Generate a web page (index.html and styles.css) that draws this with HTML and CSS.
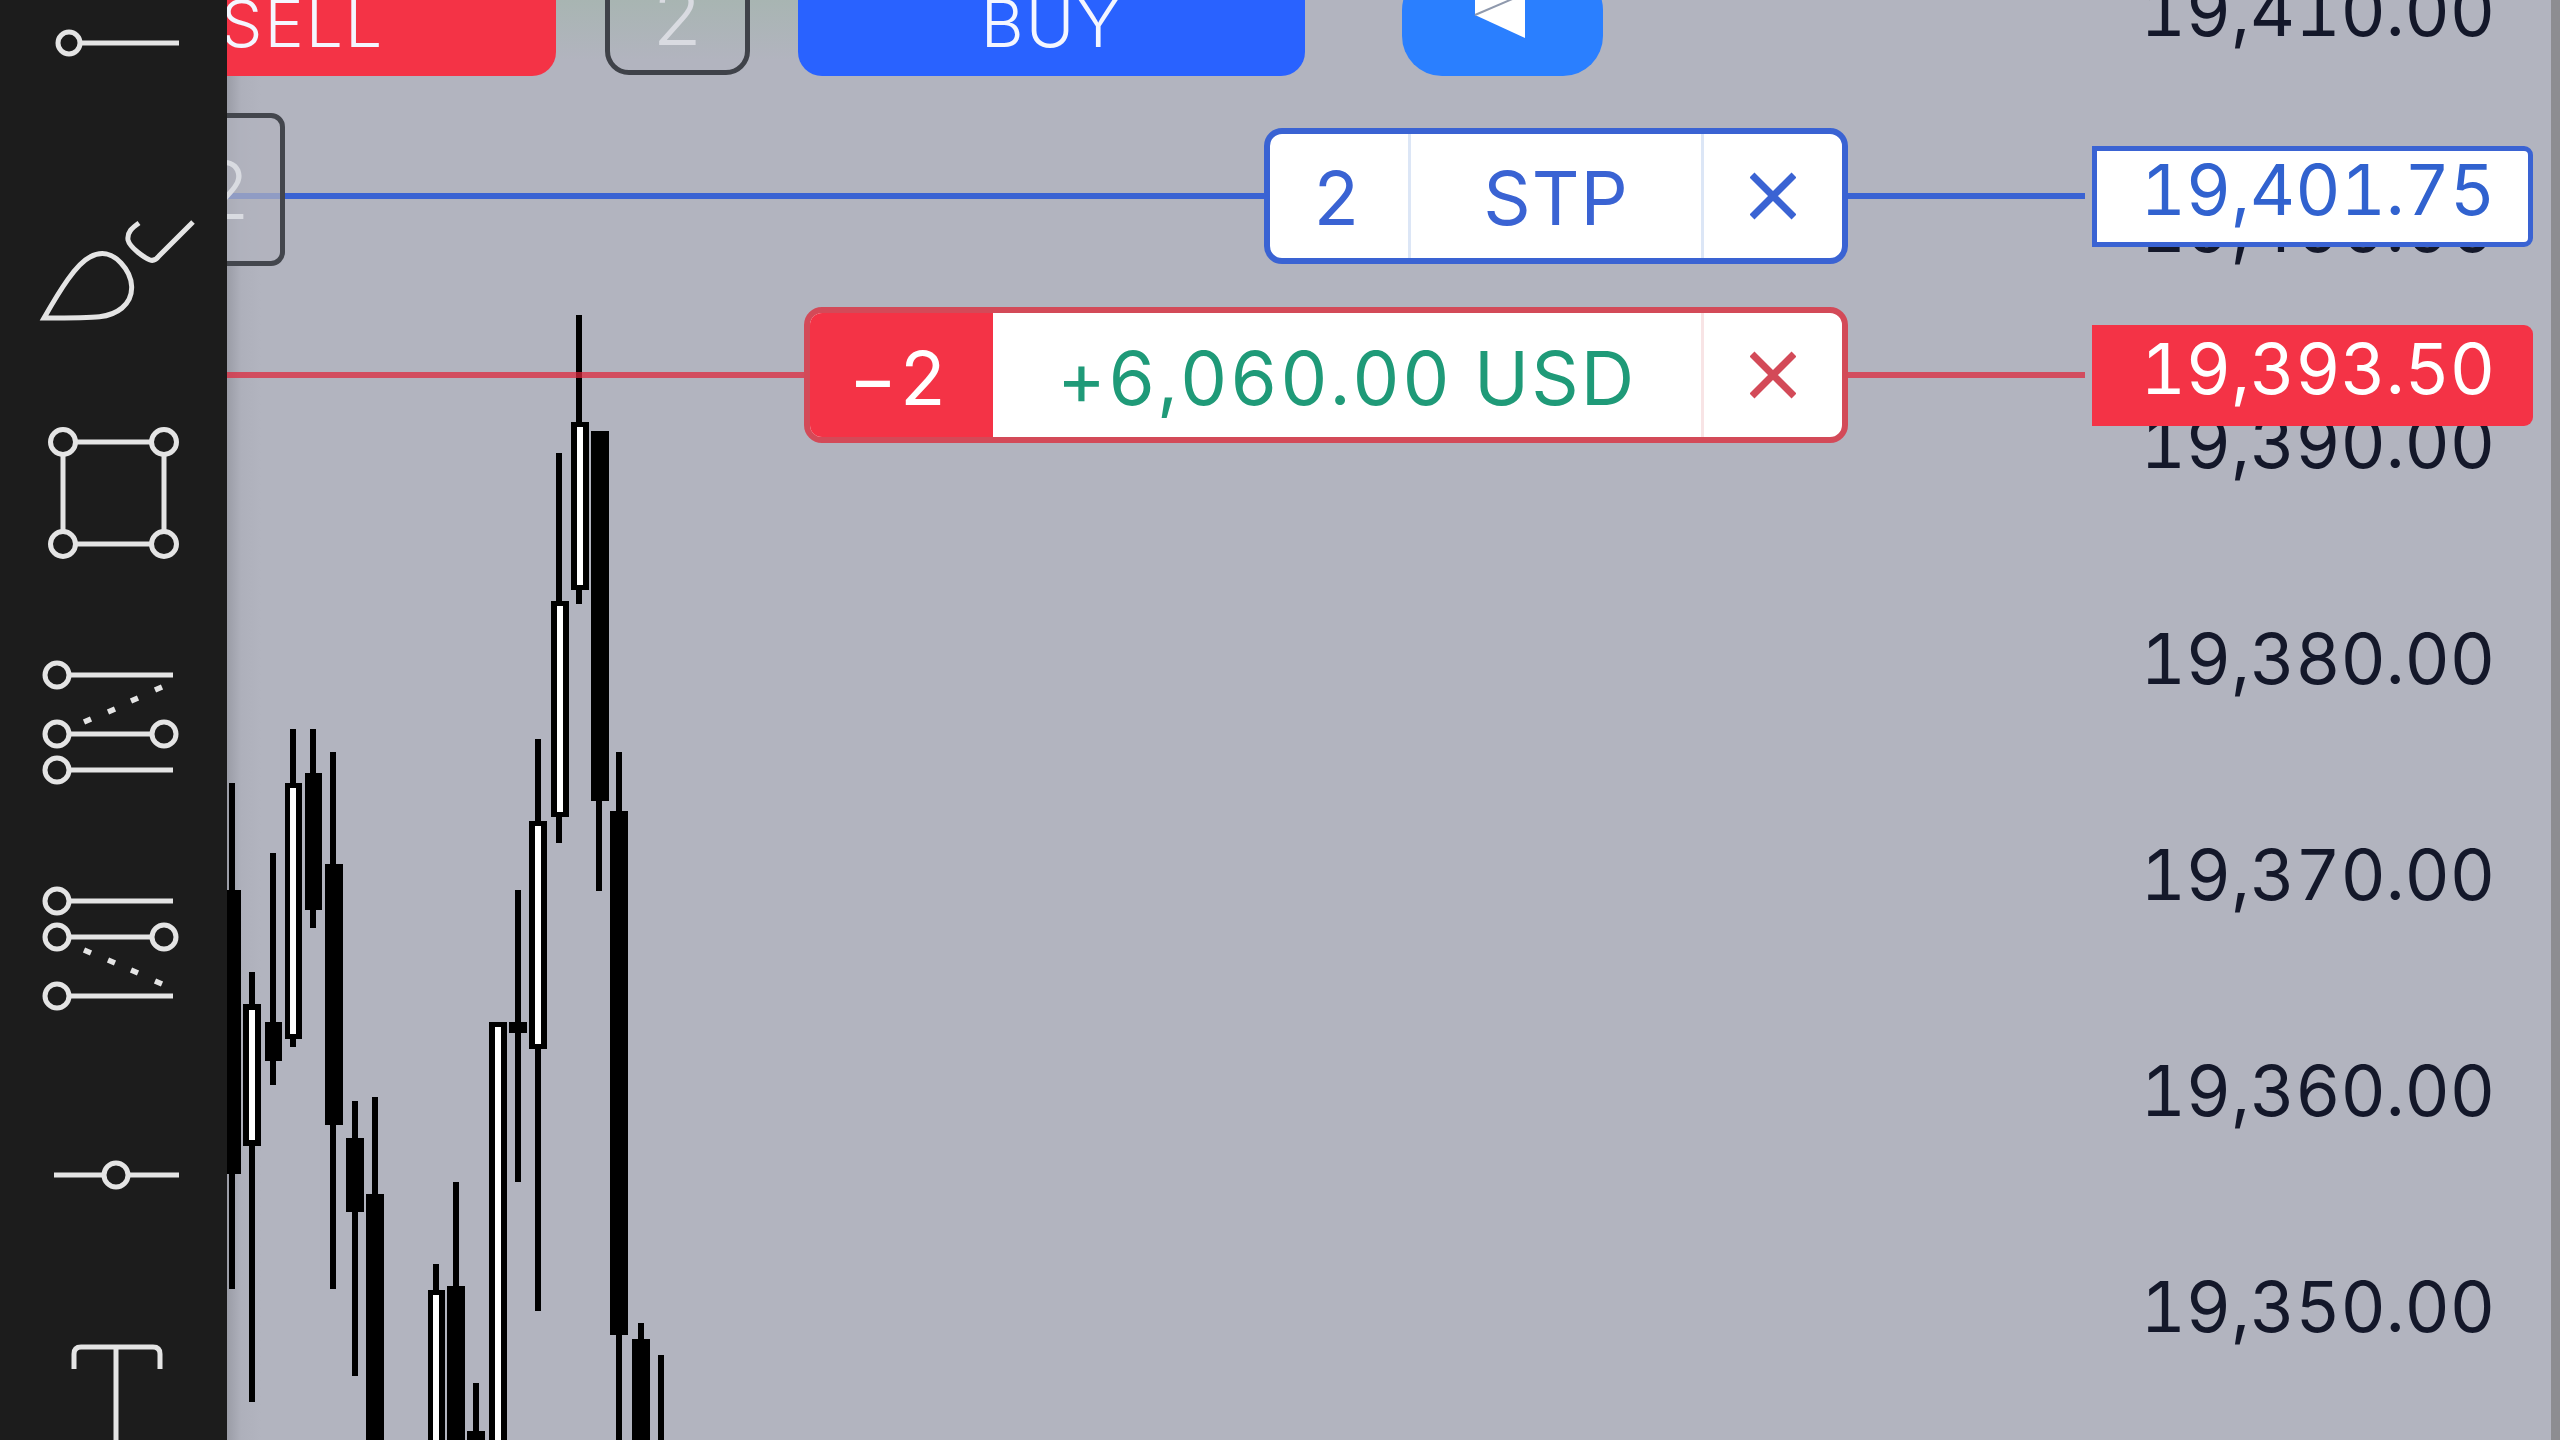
FILE: index.html
```html
<!DOCTYPE html>
<html lang="en">
<head>
<meta charset="utf-8">
<title>Chart</title>
<link rel="stylesheet" href="styles.css">
</head>
<body>
<div class="screen">
  <aside class="toolbar">
    <svg class="tool tool-a" viewBox="0 0 227 120"><circle cx="69" cy="43" r="11"/><path d="M80 43H179"/></svg>
    <svg class="tool tool-b" viewBox="0 120 227 240"><path d="M44 318C60 290 76 264 90 257C101 251 112 253 121 263C134 277 136 296 122 308C110 318 100 318 44 318Z"/><path d="M139 223C132 228 127 232 128 240C130 248 145 258 150 260C153 261 156 260 159 256L193 222"/></svg>
    <svg class="tool tool-c" viewBox="0 360 227 260"><circle cx="63" cy="442" r="12.5"/><circle cx="164" cy="442" r="12.5"/><circle cx="63" cy="544" r="12.5"/><circle cx="164" cy="544" r="12.5"/><path d="M75.500 442H151.500M63 454.500V531.500M164 454.500V531.500M75.500 544H151.500"/></svg>
    <svg class="tool tool-d" viewBox="0 620 227 230"><circle cx="57" cy="675" r="12"/><circle cx="57" cy="734" r="12"/><circle cx="57" cy="770" r="12"/><circle cx="164" cy="734" r="12"/><path d="M69 675H173M69 734H152M69 770H173"/><path class="dash" d="M84 722L91 719M108 712L115 709M131 701L138 698M155 690L162 687"/></svg>
    <svg class="tool tool-e" viewBox="0 850 227 230"><circle cx="57" cy="901" r="12"/><circle cx="57" cy="937" r="12"/><circle cx="57" cy="996" r="12"/><circle cx="164" cy="937" r="12"/><path d="M69 901H173M69 937H152M69 996H173"/><path class="dash" d="M84 950L91 953M108 960L115 963M131 970L138 973M155 981L162 984"/></svg>
    <svg class="tool tool-f" viewBox="0 1080 227 190"><circle cx="116" cy="1175" r="12"/><path d="M54 1175H104M128 1175H179"/></svg>
    <svg class="tool tool-g" viewBox="0 1270 227 170"><path d="M74 1369V1354Q74 1347 81 1347H153Q160 1347 160 1354V1369M116 1347V1440"/></svg>
  </aside>

  <main class="chart">
    <svg class="candles" viewBox="227 0 2333 1440">
      <g class="ink">
        <rect x="229" y="783" width="6" height="506"/><rect x="223" y="890" width="18" height="284"/>
        <rect x="249" y="972" width="6" height="430"/><rect x="243" y="1004" width="18" height="142"/>
        <rect x="270" y="853" width="6" height="232"/><rect x="265" y="1022" width="17" height="39"/>
        <rect x="290" y="729" width="6" height="318"/><rect x="285" y="783" width="17" height="256"/>
        <rect x="310" y="729" width="6" height="199"/><rect x="305" y="773" width="17" height="137"/>
        <rect x="330" y="752" width="6" height="537"/><rect x="325" y="864" width="18" height="261"/>
        <rect x="352" y="1101" width="6" height="275"/><rect x="346" y="1138" width="18" height="74"/>
        <rect x="372" y="1097" width="6" height="343"/><rect x="366" y="1194" width="18" height="246"/>
        <rect x="433" y="1264" width="6" height="176"/><rect x="428" y="1290" width="17" height="150"/>
        <rect x="453" y="1182" width="6" height="258"/><rect x="447" y="1286" width="18" height="154"/>
        <rect x="473" y="1383" width="6" height="57"/><rect x="467" y="1431" width="18" height="9"/>
        <rect x="489" y="1022" width="18" height="418"/>
        <rect x="515" y="890" width="6" height="292"/><rect x="509" y="1022" width="18" height="11"/>
        <rect x="535" y="739" width="6" height="572"/><rect x="529" y="821" width="18" height="228"/>
        <rect x="556" y="453" width="6" height="390"/><rect x="551" y="601" width="18" height="216"/>
        <rect x="576" y="315" width="6" height="289"/><rect x="571" y="422" width="18" height="168"/>
        <rect x="596" y="431" width="6" height="460"/><rect x="591" y="431" width="18" height="370"/>
        <rect x="616" y="752" width="6" height="688"/><rect x="610" y="811" width="18" height="524"/>
        <rect x="638" y="1323" width="6" height="117"/><rect x="632" y="1339" width="18" height="101"/>
        <rect x="658" y="1355" width="6" height="85"/>
      </g>
      <g class="hollow">
        <rect x="249" y="1010" width="6" height="130"/>
        <rect x="290" y="788" width="6" height="246"/>
        <rect x="433" y="1295" width="6" height="145"/>
        <rect x="495" y="1027" width="6" height="413"/>
        <rect x="535" y="826" width="6" height="218"/>
        <rect x="557" y="606" width="6" height="206"/>
        <rect x="577" y="427" width="6" height="158"/>
      </g>
    </svg>

    <div class="axis">
      <span class="tick">19,410.00</span>
      <span class="tick">19,400.00</span>
      <span class="tick">19,390.00</span>
      <span class="tick">19,380.00</span>
      <span class="tick">19,370.00</span>
      <span class="tick">19,360.00</span>
      <span class="tick">19,350.00</span>
    </div>

    <div class="order order-stop">
      <span class="line"></span>
      <div class="ticket">
        <span class="cell cell-qty">2</span>
        <span class="cell cell-text">STP</span>
        <span class="cell cell-close"><svg class="x" viewBox="0 0 46 46"><path d="M2 2L44 44M44 2L2 44"/></svg></span>
      </div>
      <span class="line line-end"></span>
      <span class="price">19,401.75</span>
    </div>

    <div class="order order-pos">
      <span class="line"></span>
      <div class="ticket">
        <span class="cell cell-qty">−2</span>
        <span class="cell cell-text">+6,060.00 USD</span>
        <span class="cell cell-close"><svg class="x" viewBox="0 0 46 46"><path d="M2 2L44 44M44 2L2 44"/></svg></span>
      </div>
      <span class="line line-end"></span>
      <span class="price">19,393.50</span>
    </div>

    <div class="qty-side"><span>2</span></div>
    <div class="tint"></div>

    <div class="trade-bar">
      <span class="btn btn-sell">SELL</span>
      <span class="qty-top">2</span>
      <span class="btn btn-buy">BUY</span>
      <span class="btn btn-logo"><svg class="logo" viewBox="1402 -30 201 106"><path class="logo-fill" d="M1475 -30H1525V38L1475 15Z"/><path class="logo-cut" d="M1475 15L1517 -3"/></svg></span>
    </div>

    <div class="edge"></div>
  </main>
</div>
</body>
</html>
```

FILE: styles.css
```css
* { box-sizing: border-box; }

html, body {
  margin: 0;
  padding: 0;
  background: #b1b3be;
}

.screen {
  display: flex;
  width: 2560px;
  height: 1440px;
  overflow: hidden;
  font-family: Inter, "Liberation Sans", sans-serif;
  font-variant-numeric: tabular-nums;
}

/* toolbar */
.toolbar {
  display: flex;
  flex-direction: column;
  flex: 0 0 227px;
  background: #1c1c1c;
}

.tool {
  display: block;
  width: 227px;
  fill: none;
  stroke: #e4e4e4;
  stroke-width: 5;
}
.tool-a { height: 120px; }
.tool-b { height: 240px; }
.tool-c { height: 260px; }
.tool-d, .tool-e { height: 230px; }
.tool-f { height: 190px; }
.tool-g { height: 170px; }
.tool .dash { stroke-width: 5.5; }

/* chart */
.chart {
  position: relative;
  flex: 1;
  overflow: hidden;
  background: linear-gradient(90deg, #9a9ca6 0, #aeb0bb 14px, #b2b4bf 34px);
}

.candles {
  position: absolute;
  top: 0;
  left: 0;
  width: 2333px;
  height: 1440px;
}
.ink { fill: #000; }
.hollow { fill: #fff; }

.axis {
  position: absolute;
  top: -97px;
  right: 65px;
  display: flex;
  flex-direction: column;
  align-items: flex-end;
}
.tick {
  height: 216px;
  line-height: 216px;
  font-size: 70px;
  letter-spacing: -0.1px;
  color: #14182a;
  white-space: nowrap;
}

/* order rows */
.order {
  position: absolute;
  left: 0;
  right: 27px;
  display: flex;
  align-items: center;
  height: 136px;
}
.order-stop { top: 128px; --tone: #3a63d3; --rule: #3a63d3; --split: #dce6f6; }
.order-pos { top: 307px; --tone: #d34a58; --rule: rgba(222, 38, 58, .72); --split: #f8e4e5; }

.line {
  flex: 1;
  height: 6px;
  background: var(--rule);
}
.line-end {
  flex: 0 0 237px;
  margin-right: 7px;
}

.ticket {
  display: flex;
  height: 136px;
  background: #fff;
  border: 6px solid var(--tone);
  border-radius: 18px;
  overflow: hidden;
  color: #3a63d3;
  font-size: 74px;
}
.cell {
  display: flex;
  align-items: center;
  justify-content: center;
  height: 100%;
  letter-spacing: 1px;
}
.cell-close {
  flex: 0 0 141px;
  border-left: 3px solid var(--split);
}
.x {
  width: 46px;
  height: 48px;
  fill: none;
  stroke: var(--tone);
  stroke-width: 7;
}

.order-stop .ticket { width: 584px; }
.order-stop .cell-qty {
  flex: 0 0 138px;
  padding-top: 4px;
  padding-right: 4px;
}
.order-stop .cell-text {
  flex: 1;
  border-left: 3px solid var(--split);
  padding-top: 4px;
}

.order-pos .ticket { width: 1044px; }
.order-pos .cell-qty {
  flex: 0 0 183px;
  background: #f43346;
  color: #fff;
  padding-top: 6px;
  padding-right: 5px;
  letter-spacing: 2px;
}
.order-pos .cell-text {
  flex: 1;
  color: #1f9a78;
  padding-top: 6px;
  letter-spacing: 2.1px;
}

.price {
  flex: 0 0 441px;
  display: flex;
  align-items: center;
  justify-content: flex-end;
  height: 101px;
  padding-right: 33px;
  font-size: 70px;
  letter-spacing: -0.1px;
  border-radius: 0 9px 9px 0;
  white-space: nowrap;
}
.order-stop .price {
  background: #fff;
  border: 5px solid #3a63d3;
  color: #3162cf;
  padding-bottom: 14px;
}
.order-pos .price {
  background: #f43346;
  color: #fff;
  padding-right: 38px;
  padding-bottom: 14px;
}

/* quantity chip clipped by the toolbar */
.qty-side {
  position: absolute;
  top: 113px;
  left: -60px;
  width: 118px;
  height: 153px;
  display: flex;
  align-items: center;
  justify-content: flex-end;
  padding-right: 29px;
  background: rgba(177, 179, 190, .72);
  border: 5px solid #43464d;
  border-radius: 14px;
  font-size: 80px;
  font-weight: 300;
  color: #d9dbe1;
}

.tint {
  position: absolute;
  top: 0;
  left: 0;
  width: 580px;
  height: 60px;
  background: linear-gradient(180deg, #a8b5b2, rgba(177, 179, 190, 0));
}

/* buttons at the top edge */
.trade-bar {
  position: absolute;
  top: -30px;
  left: -178px;
  display: flex;
  align-items: flex-start;
}
.btn {
  display: flex;
  align-items: center;
  justify-content: center;
  height: 106px;
  font-size: 66px;
  font-weight: 300;
  letter-spacing: 2px;
  color: #f4f6ff;
}
.btn-sell {
  width: 507px;
  background: #f43346;
  border-radius: 24px;
}
.qty-top {
  display: flex;
  align-items: center;
  justify-content: center;
  width: 145px;
  height: 105px;
  margin: 0 48px 0 49px;
  padding-bottom: 15px;
  border: 5px solid #3f4249;
  border-radius: 24px;
  font-size: 80px;
  font-weight: 300;
  color: #d9dbe1;
}
.btn-buy {
  width: 507px;
  background: #2962ff;
  border-radius: 24px;
}
.btn-logo {
  width: 201px;
  margin-left: 97px;
  background: #2a7fff;
  border-radius: 40px;
  overflow: hidden;
}
.logo {
  display: block;
  width: 201px;
  height: 106px;
}
.logo-fill { fill: #fff; }
.logo-cut {
  fill: none;
  stroke: #8f99ad;
  stroke-width: 2;
}

.edge {
  position: absolute;
  top: 0;
  right: 0;
  bottom: 0;
  width: 9px;
  background: #8d8d91;
}
```
